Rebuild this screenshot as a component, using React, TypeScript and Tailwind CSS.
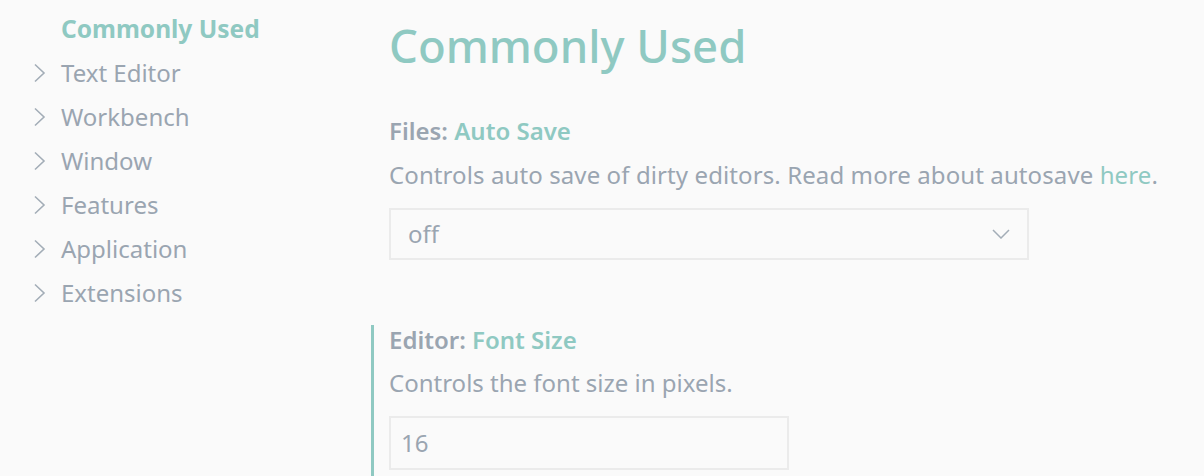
const sections = ['Text Editor', 'Workbench', 'Window', 'Features', 'Application', 'Extensions']

function Chevron() {
  return (
    <svg className="ml-[34px] mr-[15px] shrink-0" width="12" height="20" viewBox="0 0 12 20" fill="none">
      <path d="M1 1.5 L10 10 L1 18.5" stroke="#a3adb7" strokeWidth="1.6" />
    </svg>
  )
}

function App() {
  return (
    <div className="w-[1204px] h-[476px] overflow-hidden bg-[#fafafa] flex font-['Noto_Sans',sans-serif] text-[#9aa5b1]">
      <nav className="w-[371px] shrink-0 pt-[7px]">
        <div className="h-[44px] pl-[61px] flex items-center text-[24.5px] font-bold text-[#8fc9c2] leading-none">
          Commonly Used
        </div>
        {sections.map((name) => (
          <div key={name} className="h-[44px] flex items-center leading-none text-[24px]">
            <Chevron />
            {name}
          </div>
        ))}
      </nav>
      <main className="flex-1 min-w-0">
        <h1 className="ml-[18px] mt-[19px] text-[45.5px] leading-[52px] text-[#8fc9c2] font-medium">
          Commonly Used
        </h1>
        <div className="pl-[18px] mt-[45px]">
          <div className="text-[24px] leading-[30px] font-semibold">
            Files: <span className="text-[#8fc9c2]">Auto Save</span>
          </div>
          <div className="mt-[14px] text-[24px] leading-[30px] tracking-[0.1px]">
            Controls auto save of dirty editors. Read more about autosave{' '}
            <span className="text-[#8fc9c2]">here</span>.
          </div>
          <div className="mt-[18px] w-[640px] h-[52px] border-2 border-[#ebebeb] flex items-center justify-between pl-[17px] pr-[17px] text-[24px]">
            <span>off</span>
            <svg width="18" height="10" viewBox="0 0 18 10" fill="none">
              <path d="M1 1 L9 9 L17 1" stroke="#a3adb7" strokeWidth="1.5" />
            </svg>
          </div>
        </div>
        <div className="mt-[65px] border-l-[3px] border-[#8fc9c2] pl-[15px] pb-[6px]">
          <div className="text-[24px] leading-[30px] font-semibold">
            Editor: <span className="text-[#8fc9c2]">Font Size</span>
          </div>
          <div className="mt-[13px] text-[24px] leading-[30px]">Controls the font size in pixels.</div>
          <div className="mt-[18px] w-[400px] h-[54px] border-2 border-[#ebebeb] flex items-center pl-[10px] text-[24px]">
            16
          </div>
        </div>
      </main>
    </div>
  )
}

export default App
